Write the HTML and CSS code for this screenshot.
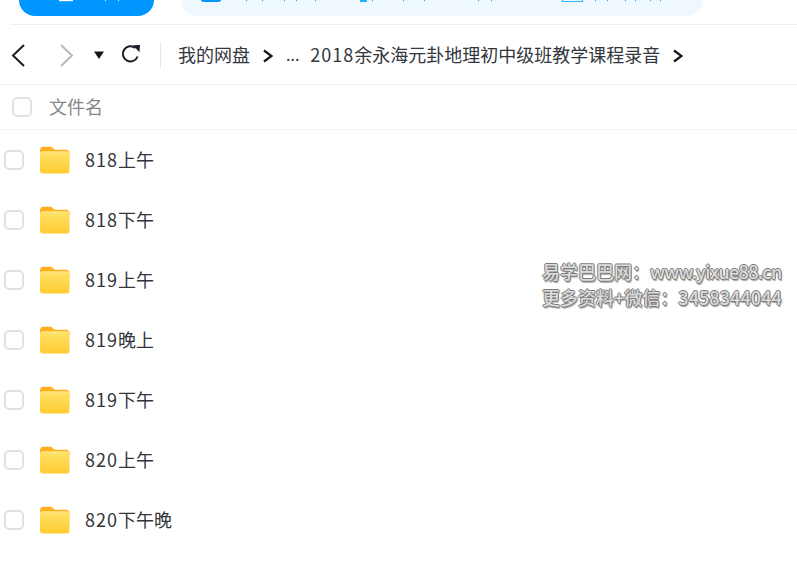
FILE: index.html
```html
<!DOCTYPE html>
<html lang="zh">
<head>
<meta charset="utf-8">
<title>我的网盘</title>
<link rel="stylesheet" href="styles.css">
</head>
<body>
<svg class="defs" width="0" height="0" aria-hidden="true">
  <defs>
    <linearGradient id="folderFront" x1="0" y1="0" x2="0" y2="1">
      <stop offset="0" stop-color="#ffe88e"/>
      <stop offset="0.14" stop-color="#ffe062"/>
      <stop offset="1" stop-color="#ffca30"/>
    </linearGradient>
    <symbol id="folder" viewBox="0 0 30 28">
      <path d="M0 4.5C0 2.4 1.3 .8 3.1 .8h7c1.3 0 2.1.6 3 1.5L14.5 3.8h11.9c1.8 0 3.1 1.3 3.1 3.1v4H0z" fill="#fdb11f"/>
      <rect x="0" y="5.2" width="29.5" height="22.3" rx="3" fill="url(#folderFront)"/>
    </symbol>
  </defs>
</svg>
<div class="top">
  <div class="upload"></div>
  <div class="search"></div>
  <svg class="clipped" width="797" height="4" viewBox="0 0 797 4" aria-hidden="true">
    <rect x="59" y="0" width="14" height="1.2" fill="#fff"/>
    <rect x="105" y="0" width="1" height="1.2" fill="#cfeaff"/>
    <rect x="118" y="0" width="1" height="1.2" fill="#cfeaff"/>
    <path d="M201 0h20c0 1-1 2-3 2h-14c-2 0-3-1-3-2z" fill="#0096ff"/>
    <g fill="#27aeff">
      <rect x="246" y="0" width="1" height="1.2"/>
      <rect x="262" y="0" width="1" height="1.2"/>
      <rect x="284" y="0" width="1" height="1.2"/>
      <rect x="296" y="0" width="1" height="1.2"/>
      <rect x="315" y="0" width="1" height="1.2"/>
      <rect x="360" y="0" width="7" height="2"/>
      <rect x="372" y="0" width="1" height="1.2"/>
      <rect x="403" y="0" width="1" height="1.2"/>
      <rect x="424" y="0" width="1" height="1.2"/>
      <rect x="478" y="0" width="1" height="1.2"/>
      <rect x="491" y="0" width="1" height="1.2"/>
      <rect x="595" y="0" width="1" height="1.2"/>
      <rect x="607" y="0" width="1" height="1.2"/>
      <rect x="625" y="0" width="1" height="1.2"/>
      <rect x="635" y="0" width="1" height="1.2"/>
      <rect x="650" y="0" width="1" height="1.2"/>
      <rect x="660" y="0" width="1" height="1.2"/>
    </g>
    <path d="M562.5 0v1.5h20V0" fill="none" stroke="#2db7ff" stroke-width="1.2"/>
  </svg>
</div>
<div class="crumbs">
  <div class="nav">
    <svg class="ic back" width="16" height="24" viewBox="0 0 16 24"><path d="M14 2 3 12.5 14 23" fill="none" stroke="#1a1d26" stroke-width="2"/></svg>
    <svg class="ic fwd" width="16" height="24" viewBox="0 0 16 24"><path d="M3 2 14 12.5 3 23" fill="none" stroke="#b9b9b9" stroke-width="2"/></svg>
    <svg class="ic drop" width="10" height="8" viewBox="0 0 10 8"><path d="M0 0.5h10L5 8z" fill="#14161f"/></svg>
    <svg class="ic reload" width="20" height="20" viewBox="0 0 20 20"><path d="M16.6 12.5A7.6 7.6 0 1 1 14.4 4" fill="none" stroke="#1a1d26" stroke-width="2"/><path d="M12 1.2 19 1l-.6 7.2z" fill="#1a1d26"/></svg>
  </div>
  <div class="path">
    <span>我的网盘</span>
    <svg class="sep" width="10" height="14" viewBox="0 0 10 14"><path d="M1 1.5 8.5 7 1 12.5" fill="none" stroke="#14161f" stroke-width="2.2"/></svg>
    <span class="dots">...</span>
    <span class="long"><span class="num">2018</span>余永海元卦地理初中级班教学课程录音</span>
    <svg class="sep" width="10" height="14" viewBox="0 0 10 14"><path d="M1 1.5 8.5 7 1 12.5" fill="none" stroke="#14161f" stroke-width="2.2"/></svg>
  </div>
</div>
<div class="head">
  <span class="check head-check"></span>
  <span class="head-label">文件名</span>
</div>
<ul class="list">
  <li class="row"><span class="check"></span><svg class="folder" width="30" height="28"><use href="#folder"/></svg><span class="name"><span class="num">818</span>上午</span></li>
  <li class="row"><span class="check"></span><svg class="folder" width="30" height="28"><use href="#folder"/></svg><span class="name"><span class="num">818</span>下午</span></li>
  <li class="row"><span class="check"></span><svg class="folder" width="30" height="28"><use href="#folder"/></svg><span class="name"><span class="num">819</span>上午</span></li>
  <li class="row"><span class="check"></span><svg class="folder" width="30" height="28"><use href="#folder"/></svg><span class="name"><span class="num">819</span>晚上</span></li>
  <li class="row"><span class="check"></span><svg class="folder" width="30" height="28"><use href="#folder"/></svg><span class="name"><span class="num">819</span>下午</span></li>
  <li class="row"><span class="check"></span><svg class="folder" width="30" height="28"><use href="#folder"/></svg><span class="name"><span class="num">820</span>上午</span></li>
  <li class="row"><span class="check"></span><svg class="folder" width="30" height="28"><use href="#folder"/></svg><span class="name"><span class="num">820</span>下午晚</span></li>
</ul>
<div class="mark">
  <div>易学巴巴网：<span class="mark-url">www.yixue88.cn</span></div>
  <div>更多资料+微信：<span class="mark-tel">3458344044</span></div>
</div>
</body>
</html>
```

FILE: styles.css
```css
* { box-sizing: border-box; }
html, body { margin: 0; padding: 0; }
body {
  width: 797px;
  height: 569px;
  overflow: hidden;
  position: relative;
  background: #fff;
  color: #33363c;
  font-family: "Noto Sans CJK SC", "Liberation Sans", sans-serif;
  font-size: 18px;
}
.defs { position: absolute; }
.top {
  height: 25px;
  margin-left: 10px;
  padding: 0 0 8px 9px;
  display: flex;
  gap: 27px;
  border-bottom: 1px solid #eeeeee;
}
.upload {
  width: 135px;
  background: #0096ff;
  border-radius: 0 0 26px 26px;
}
.search {
  width: 522px;
  background: #f0f8ff;
  border-radius: 0 0 26px 26px;
}
.clipped { position: absolute; left: 0; top: 0; display: block; }
.crumbs {
  height: 60px;
  display: flex;
  align-items: center;
  border-bottom: 1px solid #eeeeee;
}
.nav {
  width: 161px;
  height: 26px;
  padding-left: 10px;
  display: flex;
  align-items: center;
  border-right: 1px solid #e6e6e6;
}
.ic { display: block; flex: none; }
.fwd { margin-left: 32px; }
.drop { margin-left: 20px; margin-top: 1px; }
.reload { margin-left: 17px; margin-top: -1px; }
.path {
  padding-left: 17px;
  display: flex;
  align-items: center;
  line-height: 26px;
  white-space: nowrap;
}
.path > span { position: relative; top: -1px; }
.sep { display: block; margin-left: 13px; margin-top: 3px; }
.dots { margin-left: 13px; font-size: 16px; }
.long { margin-left: 11px; }
.path .long + .sep { margin-left: 13px; }
.num { letter-spacing: 1px; }
.head {
  height: 45px;
  display: flex;
  align-items: center;
  border-bottom: 1px solid #f5f5f5;
}
.head-check { margin-left: 12px; }
.head-label { margin-left: 17px; color: #85878c; line-height: 26px; position: relative; top: -1px; }
.check {
  display: block;
  flex: none;
  width: 20px;
  height: 20px;
  border: 2px solid #e2e2e2;
  border-radius: 5px;
  background: #fff;
}
.list { list-style: none; margin: 0; padding: 0; }
.row {
  height: 60px;
  padding-left: 4px;
  display: flex;
  align-items: center;
}
.folder { display: block; flex: none; margin-left: 16px; }
.name { margin-left: 15px; line-height: 26px; position: relative; top: -1px; }
.mark {
  position: absolute;
  left: 542px;
  top: 258px;
  font-size: 18px;
  font-weight: 500;
  line-height: 26px;
  white-space: nowrap;
  color: #dcdcdc;
  text-shadow: -1px 0 0 #7c7c7c, 1px 0 0 #7c7c7c, 0 -1px 0 #7c7c7c, 0 1px 0 #7c7c7c, 1px 2px 1px #a0a0a0;
}
.mark-url { letter-spacing: -0.65px; }
.mark-tel { letter-spacing: 0.1px; }
```
